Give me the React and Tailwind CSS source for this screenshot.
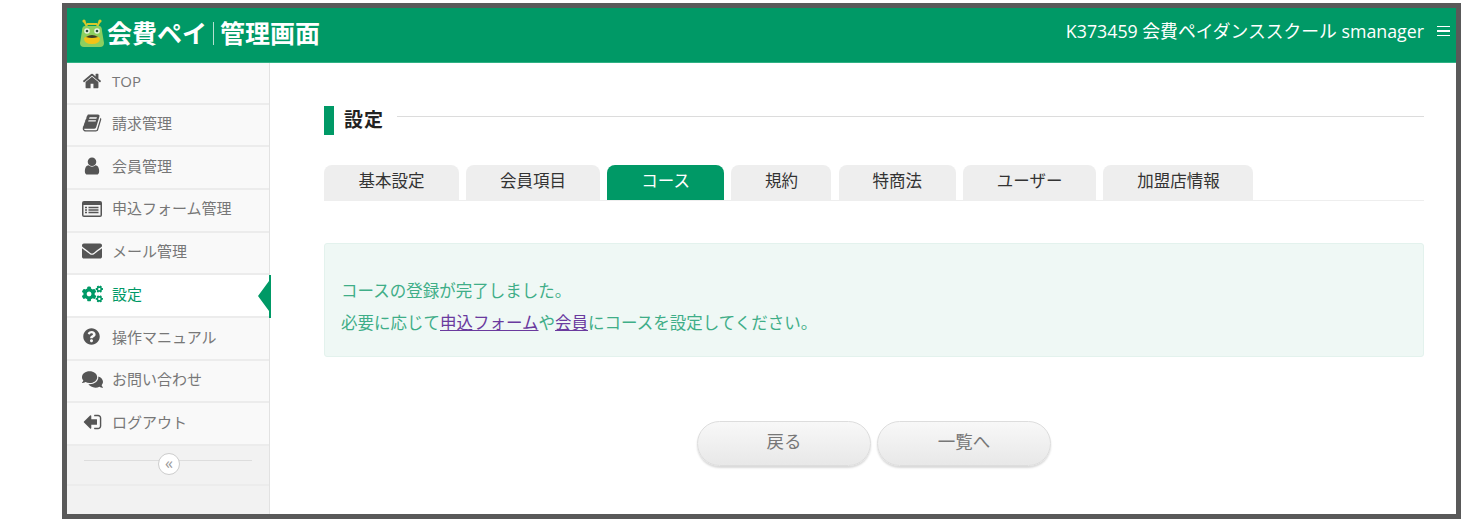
import { FaEnvelope, FaCogs, FaQuestionCircle, FaComments } from 'react-icons/fa';

const FONT = "font-['Open_Sans','Noto_Sans_CJK_JP',sans-serif]";

function Fa4({ d, className }) {
  return (
    <svg className={className} viewBox="0 0 1792 1792" fill="currentColor">
      <path d={d} />
    </svg>
  );
}

const HOME = 'M1472 992v480q0 26-19 45t-45 19h-384v-384h-256v384h-384q-26 0-45-19t-19-45v-480q0-1 .5-3t.5-3l575-474 575 474q1 2 1 6zm223-69l-62 74q-8 9-21 11h-3q-13 0-21-7l-692-577-692 577q-12 8-24 7-13-2-21-11l-62-74q-8-10-7-23.500t11-21.500l719-599q32-26 76-26t76 26l244 204v-195q0-14 9-23t23-9h192q14 0 23 9t9 23v408l219 182q10 8 11 21.500t-7 23.500z';
const BOOK = 'M1703 478q40 57 18 129l-275 906q-19 64-76.500 107.500t-122.500 43.500h-923q-77 0-148.500-53.500t-99.500-131.500q-24-67-2-127 0-4 3-27t4-37q1-8-3-21.500t-3-19.500q2-11 8-21t16.500-23.500 16.500-23.500q23-38 45-91.500t30-91.500q3-10 .5-30t-.5-28q3-11 17-28t17-23q21-36 42-92t25-90q1-9-2.500-32t.5-28q4-13 22-30.500t22-22.500q19-26 42.500-84.500t27.500-96.500q1-8-3-25.500t-2-26.500q2-8 9-18t18-23 17-21q8-12 16.500-30.500t15-35 16-36 19.500-32 26.500-23.500 36-11.500 47.500 5.500l-1 3q38-9 51-9h761q74 0 114 56t18 130l-274 906q-36 119-71.500 153.500t-128.500 34.500h-869q-27 0-38 15-11 16-1 43 24 70 144 70h923q29 0 56-15.500t35-41.500l300-987q7-22 5-57 38 15 59 43zm-1064 2q-4 13 2 22.500t20 9.500h608q13 0 25.500-9.500t16.500-22.500l21-64q4-13-2-22.500t-20-9.500h-608q-13 0-25.500 9.500t-16.500 22.500zm-83 256q-4 13 2 22.500t20 9.500h608q13 0 25.500-9.500t16.500-22.500l21-64q4-13-2-22.500t-20-9.500h-608q-13 0-25.500 9.500t-16.500 22.500z';
const USER = 'M1536 1399q0 109-62.500 187t-150.500 78h-854q-88 0-150.500-78t-62.500-187q0-85 8.500-160.500t31.500-152 58.500-131 94-89 134.500-34.500q131 128 313 128t313-128q76 0 134.500 34.500t94 89 58.500 131 31.500 152 8.500 160.500zm-256-887q0 159-112.500 271.500t-271.500 112.500-271.500-112.500-112.500-271.500 112.500-271.500 271.500-112.500 271.500 112.500 112.500 271.500z';
const SIGN_OUT = 'M704 1440q0 4 1 20t.5 26.500-3 23.500-10 19.500-20.500 6.500h-320q-119 0-203.500-84.500t-84.500-203.500v-704q0-119 84.500-203.500t203.500-84.500h320q13 0 22.500 9.500t9.500 22.500q0 4 1 20t.5 26.500-3 23.500-10 19.500-20.500 6.500h-320q-66 0-113 47t-47 113v704q0 66 47 113t113 47h312l11.500 1 11.500 3 8 5.500 7 9 2 13.500zm928-544q0 26-19 45l-544 544q-19 19-45 19t-45-19-19-45v-288h-448q-26 0-45-19t-19-45v-384q0-26 19-45t45-19h448v-288q0-26 19-45t45-19 45 19l544 544q19 19 19 45z';

function ListAlt() {
  return (
    <svg width="20" height="16" viewBox="0 0 20 16">
      <rect width="20" height="16" rx="2" fill="#555555" />
      <rect x="1.5" y="4" width="17" height="10.500" fill="#f4f4f4" />
      <path d="M3 6.500h2M3 9h2M3 11.500h2M6.500 6.500h10M6.500 9h10M6.500 11.500h10" stroke="#555555" strokeWidth="1.400" />
    </svg>
  );
}

const menu = [
  { label: 'TOP', icon: <Fa4 d={HOME} className="w-[20px] h-[20px]" /> },
  { label: '請求管理', icon: <Fa4 d={BOOK} className="w-[20px] h-[20px]" /> },
  { label: '会員管理', icon: <Fa4 d={USER} className="w-[20px] h-[20px]" /> },
  { label: '申込フォーム管理', icon: <ListAlt /> },
  { label: 'メール管理', icon: <FaEnvelope className="w-[20px] h-[20px]" /> },
  { label: '設定', icon: <FaCogs className="w-[21px] h-[20px]" />, active: true },
  { label: '操作マニュアル', icon: <FaQuestionCircle className="w-[17px] h-[17px] ml-[1px]" /> },
  { label: 'お問い合わせ', icon: <FaComments className="w-[21px] h-[19px]" /> },
  { label: 'ログアウト', icon: <Fa4 d={SIGN_OUT} className="w-[20px] h-[20px] -scale-x-100" /> },
];

const tabs = [
  { label: '基本設定', width: 'w-[135px]' },
  { label: '会員項目', width: 'w-[133.500px]' },
  { label: 'コース', width: 'w-[117px]', active: true },
  { label: '規約', width: 'w-[100px]' },
  { label: '特商法', width: 'w-[117px]' },
  { label: 'ユーザー', width: 'w-[133px]' },
  { label: '加盟店情報', width: 'w-[150px]' },
];

function Logo() {
  return (
    <svg width="24" height="28" viewBox="0 0 24 28">
      <path d="M7 8 C6 5 5 4 4 2 M17 8 C18 5 19 4 20 2 M7 5 H17" stroke="#d8c92a" strokeWidth="2.200" fill="none" />
      <circle cx="4" cy="2" r="1.600" fill="#d8c92a" />
      <circle cx="20" cy="2" r="1.600" fill="#d8c92a" />
      <path d="M5 7 H19 Q22 7 22 12 L24 24 Q24 28 20 28 H4 Q0 28 0 24 L2 12 Q2 7 5 7 Z" fill="#8ccf5f" />
      <circle cx="7" cy="12" r="2.800" fill="#e9f5e0" />
      <circle cx="17" cy="12" r="2.800" fill="#e9f5e0" />
      <circle cx="7" cy="12" r="1.300" fill="#2a4a3a" />
      <circle cx="17" cy="12" r="1.300" fill="#2a4a3a" />
      <path d="M4 19 Q12 13 20 19 Q20 25 12 25 Q4 25 4 19 Z" fill="#f3c316" />
      <path d="M6 18 Q12 14 18 18 Q12 20 6 18 Z" fill="#35402a" />
    </svg>
  );
}

function Header() {
  return (
    <header className="h-[55px] shrink-0 bg-[#009966] border-b border-[#2fb184] flex items-center justify-between pl-[13px] pr-[6px] text-white">
      <div className="flex items-center -mt-[4px]">
        <Logo />
        <span className="ml-[3px] text-[25px] font-bold leading-none">会費ペイ</span>
        <span className="mx-[6px] w-px h-[23px] bg-[#b5e0d0]"></span>
        <span className="text-[25px] font-bold leading-none">管理画面</span>
      </div>
      <div className="flex items-center text-[17.800px] -mt-[8px]">
        <span>K373459 会費ペイダンススクール smanager</span>
        <span className="ml-[13px] w-[13px] flex flex-col gap-[3px]">
          <span className="h-[1.500px] bg-white"></span>
          <span className="h-[1.500px] bg-white"></span>
          <span className="h-[1.500px] bg-white"></span>
        </span>
      </div>
    </header>
  );
}

function Sidebar() {
  return (
    <aside className="w-[203px] shrink-0 bg-[#f2f2f2] border-r border-[#e2e2e2] flex flex-col">
      {menu.map((item) => (
        <div
          key={item.label}
          className={`relative h-[42.700px] first:h-[41.500px] first:pb-[4px] shrink-0 border-b-2 border-[#ececec] flex items-center text-[15px] pb-[3px] ${
            item.active ? 'bg-white text-[#009966]' : 'bg-[#f9f9f9] text-[#777777]'
          }`}
        >
          <span className={`w-[45px] pl-[15px] flex justify-start ${item.active ? 'text-[#009966]' : 'text-[#555555]'}`}>
            {item.icon}
          </span>
          <span>{item.label}</span>
          {item.active && (
            <svg className="absolute -right-[2px] top-0" width="13" height="43" viewBox="0 0 13 43">
              <path d="M13 0 V43 H11 V36 L0 21 L11 6 V0 Z" fill="#009966" />
            </svg>
          )}
        </div>
      ))}
      <div className="relative h-[39.500px] shrink-0 border-b-2 border-[#ececec] px-[17px] pt-[14px]">
        <div className="h-px bg-[#dddddd]"></div>
        <div className="absolute left-[91px] top-[7px] w-[22px] h-[22px] rounded-full bg-white border border-[#cccccc] flex items-center justify-center text-[#999999] text-[16px] leading-none pb-[2px]">
          «
        </div>
      </div>
    </aside>
  );
}

function Main() {
  return (
    <main className="flex-1 bg-white pl-[54px] pr-[32px] pt-[43px] flex flex-col">
      <div className="flex items-start h-[29px]">
        <span className="w-[10px] h-[29px] bg-[#009966]"></span>
        <h1 className="ml-[10px] text-[19px] tracking-[1px] font-bold leading-[28px] text-[#222222]">設定</h1>
        <span className="ml-[13px] mt-[10px] flex-1 h-px bg-[#dcdcdc]"></span>
      </div>
      <div className="mt-[30px] flex gap-[7.330px] border-b border-[#eeeeee] h-[36px]">
        {tabs.map((tab) => (
          <div
            key={tab.label}
            className={`${tab.width} h-[35px] pb-[3px] rounded-t-[8px] flex items-center justify-center text-[16.500px] ${
              tab.active ? 'bg-[#009966] text-white' : 'bg-[#eeeeee] text-[#333333]'
            }`}
          >
            {tab.label}
          </div>
        ))}
      </div>
      <div className="mt-[42px] h-[114px] bg-[#eff8f5] border border-[#e3f2ed] rounded-[3px] pl-[16px] pt-[31px] text-[16.500px] leading-[32px] text-[#3fae88]">
        <p>コースの登録が完了しました。</p>
        <p>
          必要に応じて<a href="#" className="text-[#6a3a9e] underline">申込フォーム</a>や
          <a href="#" className="text-[#6a3a9e] underline">会員</a>にコースを設定してください。
        </p>
      </div>
      <div className="mt-[64px] flex justify-center gap-[6px]">
        <button className="w-[174px] h-[45px] rounded-full border border-[#dddddd] bg-gradient-to-b from-[#f8f8f8] to-[#e8e8e8] shadow-[0_2px_2px_rgba(0,0,0,0.15)] text-[17.500px] text-[#777777] pb-[4px]">
          戻る
        </button>
        <button className="w-[174px] h-[45px] rounded-full border border-[#dddddd] bg-gradient-to-b from-[#f8f8f8] to-[#e8e8e8] shadow-[0_2px_2px_rgba(0,0,0,0.15)] text-[17.500px] text-[#777777] pb-[4px]">
          一覧へ
        </button>
      </div>
    </main>
  );
}

export default function App() {
  return (
    <div className={`w-[1464px] h-[525px] bg-white pl-[62px] pt-[3px] overflow-hidden ${FONT}`}>
      <div className="w-[1399px] h-[516px] border-[5px] border-[#595959] flex flex-col">
        <Header />
        <div className="flex flex-1 min-h-0">
          <Sidebar />
          <Main />
        </div>
      </div>
    </div>
  );
}
